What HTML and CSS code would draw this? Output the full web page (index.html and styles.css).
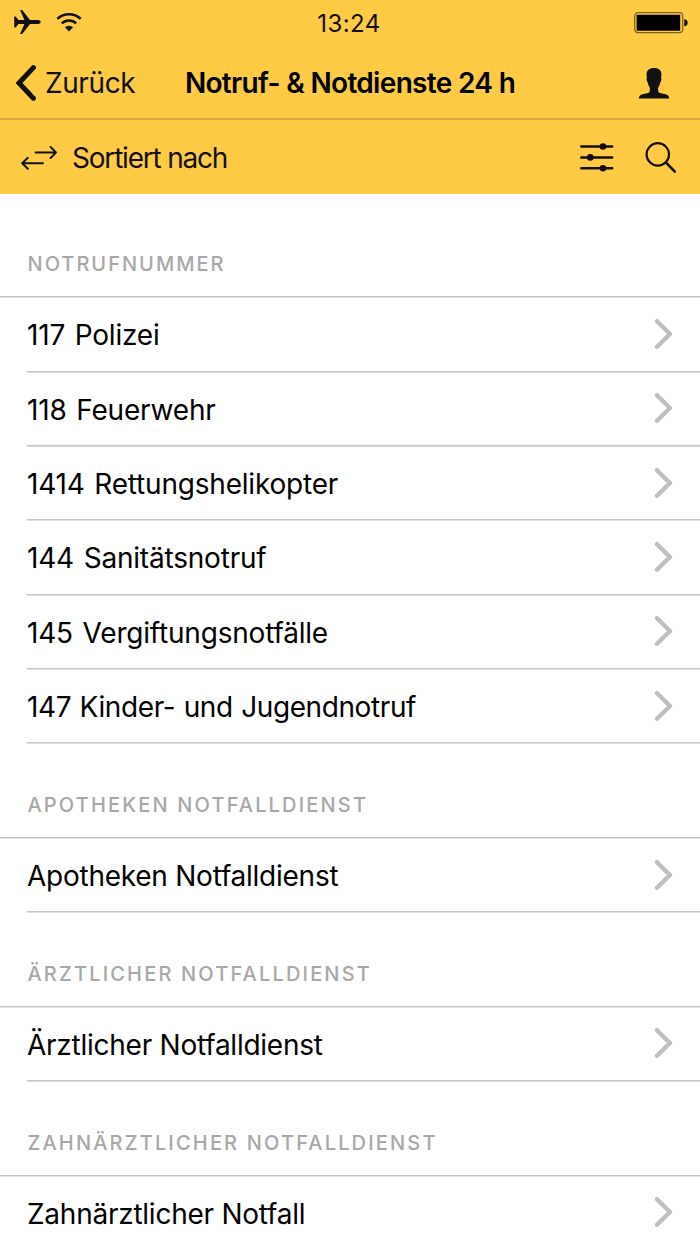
FILE: index.html
```html
<!DOCTYPE html>
<html lang="de">
<head>
    <meta charset="UTF-8" />
    <meta name="viewport" content="width=device-width, initial-scale=1.0" />
    <title>Notruf- &amp; Notdienste 24 h</title>
    <link rel="stylesheet" href="styles.css">
</head>
<body>
    <!-- Icon shared by all rows -->
    <svg width="0" height="0" class="sprite">
        <symbol id="chevron" viewBox="0 0 20 32">
            <path d="M3 3.2 L16 16 L3 28.8" fill="none" stroke="#bfbfbf" stroke-width="4.4" stroke-linecap="round" stroke-linejoin="round" />
        </symbol>
    </svg>

    <header>
        <div class="status-bar">
            <div class="status-left">
                <svg width="27" height="26" viewBox="0 0 27 26">
                    <path d="M0.2 7.6 L1.7 7.6 L4.4 11.1 L10.4 10.9 L6.1 1 L8.2 1 L16 10.9 L24.3 11 Q26.8 11.4 26.8 13 Q26.8 14.6 24.3 15 L16 15.1 L8.2 25 L6.1 25 L10.4 15.1 L4.4 14.9 L1.7 18.4 L0.2 18.4 Z" />
                </svg>
                <svg width="26" height="20" viewBox="0 0 26 20">
                    <path d="M1.3 6.8 A17 17 0 0 1 24.7 6.8 M5.8 11.3 A10.5 10.5 0 0 1 20.2 11.3" fill="none" stroke="#111" stroke-width="2.5" />
                    <path d="M13 19.4 L8.9 15.3 A5.9 5.9 0 0 1 17.1 15.3 Z" />
                </svg>
            </div>
            <div class="time">13:24</div>
            <div class="status-right">
                <svg width="54" height="22" viewBox="0 0 54 22">
                    <rect x="0.7" y="0.7" width="48" height="20" rx="3.4" fill="none" stroke="#7c6022" stroke-width="1.3" />
                    <rect x="2.6" y="2.7" width="43.6" height="16" rx="0.6" fill="#000" />
                    <path d="M50.3 7.2 Q53.6 7.6 53.6 10.7 Q53.6 13.8 50.3 14.2 Z" />
                </svg>
            </div>
        </div>

        <div class="nav-bar">
            <div class="back">
                <svg width="20" height="36" viewBox="0 0 20 36">
                    <path d="M17.4 2.6 L3 18 L17.4 33.2" fill="none" stroke="#111" stroke-width="5" stroke-linecap="round" />
                </svg>
                <span>Zurück</span>
            </div>
            <h1>Notruf- &amp; Notdienste 24 h</h1>
            <svg class="profile" width="32" height="31" viewBox="0 0 32 31">
                <path d="M16 0 C20.9 0 23.5 2.4 23.4 6.6 L23.1 10 C23.9 10.6 23.2 13.6 22.4 14 C22 16.6 21.1 18.4 20.2 19.6 C20 21.4 20.1 23 20.7 24.3 C22 25.8 26 25.6 28.4 26.6 C30.2 27.4 31 28.6 31.3 30.6 L0.7 30.6 C1 28.6 1.8 27.4 3.6 26.6 C6 25.6 10 25.8 11.3 24.3 C11.9 23 12 21.4 11.8 19.6 C10.9 18.4 10 16.6 9.6 14 C8.8 13.6 8.1 10.6 8.9 10 L8.6 6.6 C8.5 2.4 11.1 0 16 0 Z" />
            </svg>
        </div>

        <div class="tool-bar">
            <svg width="36" height="26" viewBox="0 0 36 26">
                <path d="M14.6 7.5 L35 7.5 M29.6 2 L35 7.5 L29.6 13 M22 18.3 L1.4 18.3 M6.8 12.8 L1.2 18.3 L6.8 23.8" fill="none" stroke="#111" stroke-width="1.9" stroke-linecap="round" stroke-linejoin="round" />
            </svg>
            <span class="sort">Sortiert nach</span>
            <svg class="filter" width="34" height="30" viewBox="0 0 34 30">
                <path d="M1.3 3.5 H32.2 M1.3 14.4 H32.2 M1.3 25.2 H32.2" stroke="#111" stroke-width="2.5" stroke-linecap="round" />
                <circle cx="23" cy="3.5" r="3.3" />
                <circle cx="10.3" cy="14.4" r="3.3" />
                <circle cx="23" cy="25.2" r="3.3" />
            </svg>
            <svg width="32" height="32" viewBox="0 0 32 32">
                <circle cx="12.8" cy="12.4" r="11.2" fill="none" stroke="#111" stroke-width="2.2" />
                <path d="M20.9 20.5 L29.8 29.6" stroke="#111" stroke-width="2.6" stroke-linecap="round" />
            </svg>
        </div>
    </header>

    <main>
        <section>
            <h2 class="first">NOTRUFNUMMER</h2>
            <ul class="numbers">
                <li><span>117 Polizei</span><svg class="arrow"><use href="#chevron" /></svg></li>
                <li><span>118 Feuerwehr</span><svg class="arrow"><use href="#chevron" /></svg></li>
                <li><span>1414 Rettungshelikopter</span><svg class="arrow"><use href="#chevron" /></svg></li>
                <li><span>144 Sanitätsnotruf</span><svg class="arrow"><use href="#chevron" /></svg></li>
                <li><span>145 Vergiftungsnotfälle</span><svg class="arrow"><use href="#chevron" /></svg></li>
                <li class="long"><span>147 Kinder- und Jugendnotruf</span><svg class="arrow"><use href="#chevron" /></svg></li>
            </ul>
        </section>

        <section>
            <h2>APOTHEKEN NOTFALLDIENST</h2>
            <ul>
                <li><span>Apotheken Notfalldienst</span><svg class="arrow"><use href="#chevron" /></svg></li>
            </ul>
        </section>

        <section>
            <h2>ÄRZTLICHER NOTFALLDIENST</h2>
            <ul>
                <li><span>Ärztlicher Notfalldienst</span><svg class="arrow"><use href="#chevron" /></svg></li>
            </ul>
        </section>

        <section>
            <h2>ZAHNÄRZTLICHER NOTFALLDIENST</h2>
            <ul>
                <li><span>Zahnärztlicher Notfall</span><svg class="arrow"><use href="#chevron" /></svg></li>
            </ul>
        </section>
    </main>
</body>
</html>
```
FILE: styles.css
```css
* {
    box-sizing: border-box;
}

body {
    margin: 0;
    height: 1244px;
    overflow: hidden;
    background-color: #fff;
    color: #000;
    font-family: Inter, "Liberation Sans", sans-serif;
    font-size: 28px;
}

svg {
    display: block;
    flex-shrink: 0;
    fill: #111;
}

.sprite {
    position: absolute;
}

header {
    height: 194.4px;
    background-color: #ffcb45;
    color: #111;
}

/* Status bar */
.status-bar {
    display: grid;
    grid-template-columns: 1fr auto 1fr;
    align-items: center;
    height: 46px;
    padding: 0 12px;
}

.status-left {
    display: flex;
    align-items: center;
    gap: 15px;
    padding: 0 0 2px 2px;
}

.time {
    margin-right: 2px;
    font-size: 24px;
    letter-spacing: 0.4px;
}

.status-right {
    display: flex;
    justify-content: flex-end;
}

/* Navigation */
.nav-bar {
    display: grid;
    grid-template-columns: 1fr auto 1fr;
    align-items: center;
    height: 74px;
    padding: 2px 16px 0;
    border-bottom: 2px solid #d2a840;
}

.back {
    display: flex;
    align-items: center;
    gap: 9px;
    letter-spacing: -0.4px;
}

h1 {
    margin: 0;
    font-size: 28px;
    font-weight: 600;
    letter-spacing: -0.68px;
    color: #000;
}

.profile {
    justify-self: end;
    margin-right: 14px;
}

/* Sort, filter and search */
.tool-bar {
    display: flex;
    align-items: center;
    height: 74px;
    padding: 1px 23px 0 21px;
}

.sort {
    margin-left: 15px;
    padding-top: 1px;
    letter-spacing: -1.2px;
}

.filter {
    margin-left: auto;
    margin-right: 31px;
}

/* List */
h2 {
    display: flex;
    align-items: flex-end;
    height: 94.6px;
    margin: 0;
    padding: 0 28px 19px 27.5px;
    border-bottom: 1px solid #c2c1c5;
    box-shadow: 0 1px #e3e3e5;
    color: #a8a8a8;
    font-size: 20px;
    font-weight: 500;
    line-height: 26px;
    letter-spacing: 2.17px;
}

h2.first {
    height: 102.8px;
    letter-spacing: 2px;
}

ul {
    margin: 0;
    padding: 0 0 0 27px;
    list-style: none;
}

li {
    display: flex;
    align-items: center;
    justify-content: space-between;
    height: 74.35px;
    padding: 2px 26px 0 0;
    border-bottom: 1px solid #c8c7cc;
    box-shadow: 0 1px #dddce0;
    letter-spacing: -0.25px;
}

li span {
    padding-top: 1px;
}

.numbers li {
    letter-spacing: -0.2px;
    word-spacing: 2px;
}

.numbers .long {
    letter-spacing: -0.4px;
    word-spacing: 1px;
}

.arrow {
    width: 20px;
    height: 32px;
    margin-bottom: 2px;
}
```
